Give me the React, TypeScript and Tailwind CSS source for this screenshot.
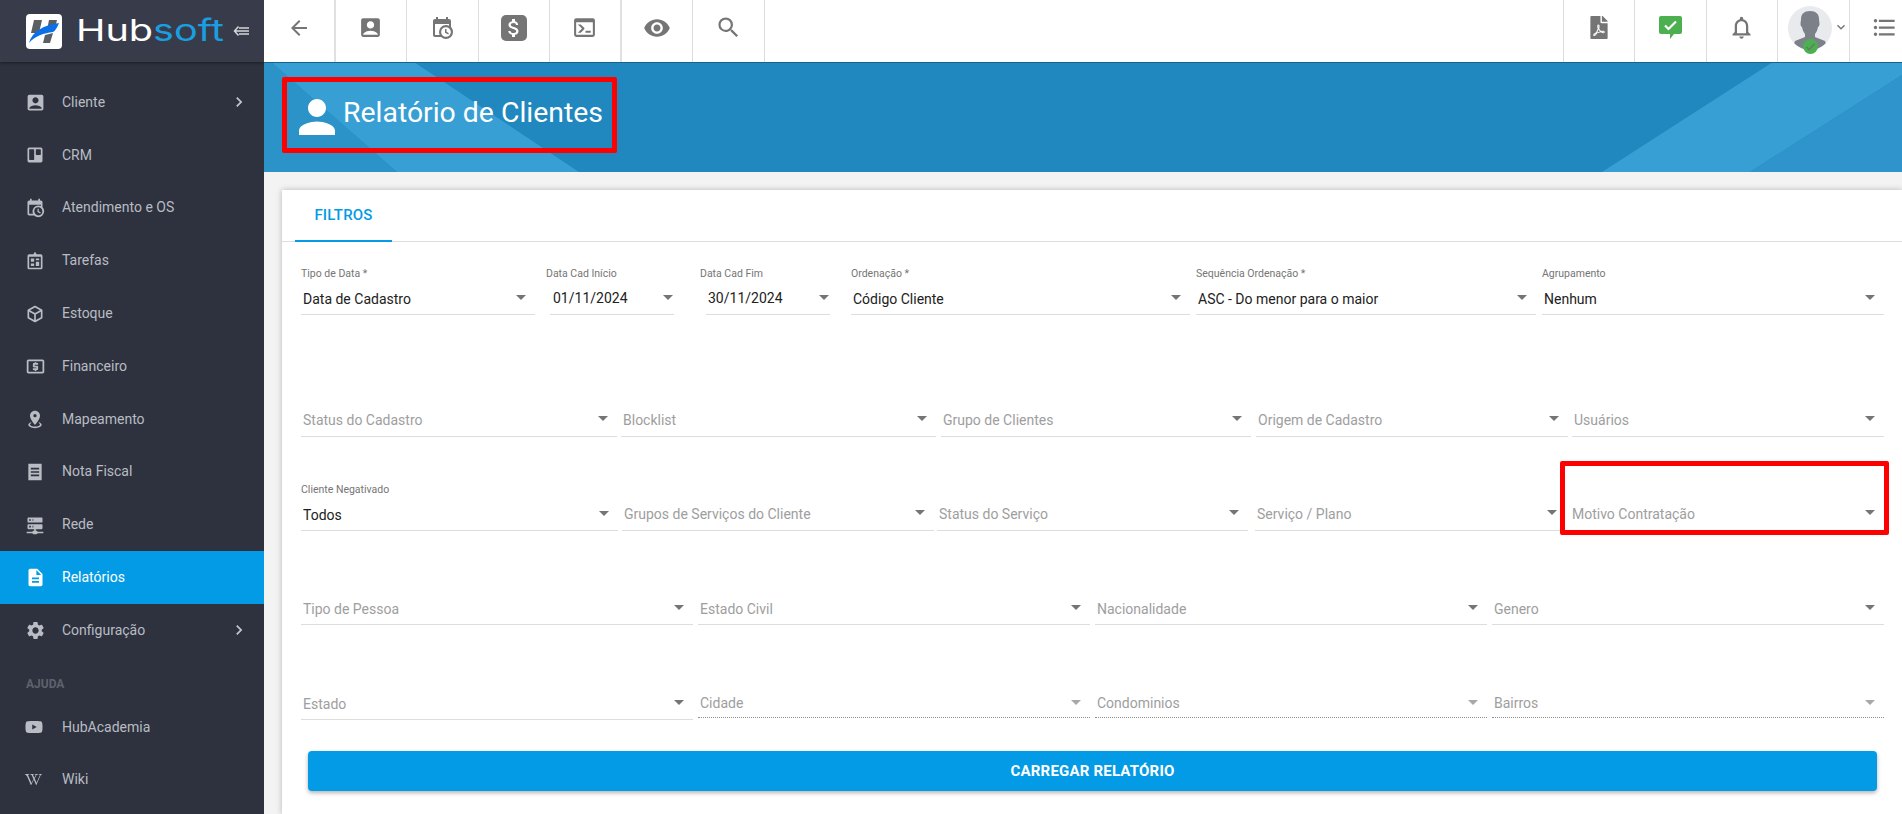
import type { ReactNode } from "react";
import {
  MdAccountBox,
  MdArrowBack,
  MdAttachMoney,
  MdChevronRight,
  MdDescription,
  MdExpandMore,
  MdFormatListBulleted,
  MdLocalAtm,
  MdNotificationsNone,
  MdRemoveRedEye,
  MdSearch,
  MdSettings,
} from "react-icons/md";
import { FaFilePdf, FaWikipediaW, FaYoutube } from "react-icons/fa";

// Material Design Icons paths not worth importing another package for.
const Mdi = ({ d, className = "w-5 h-5" }: { d: string; className?: string }) => (
  <svg viewBox="0 0 24 24" fill="currentColor" fillRule="evenodd" className={className}>
    <path d={d} />
  </svg>
);

const TRELLO =
  "M5 3h14a2 2 0 0 1 2 2v14a2 2 0 0 1-2 2H5a2 2 0 0 1-2-2V5a2 2 0 0 1 2-2zM5.8 5a.8.8 0 0 0-.8.8v11.4a.8.8 0 0 0 .8.8h4.4a.8.8 0 0 0 .8-.8V5.8a.8.8 0 0 0-.8-.8H5.8zm8 0a.8.8 0 0 0-.8.8v5.4a.8.8 0 0 0 .8.8h4.4a.8.8 0 0 0 .8-.8V5.8a.8.8 0 0 0-.8-.8h-4.4z";
const CALENDAR_CLOCK =
  "M15,13H16.5V15.82L18.94,17.23L18.19,18.53L15,16.69V13M19,8H5V19H9.67C9.24,18.09 9,17.07 9,16A7,7 0 0,1 16,9C17.07,9 18.09,9.24 19,9.67V8M5,21C3.89,21 3,20.1 3,19V5C3,3.89 3.89,3 5,3H6V1H8V3H16V1H18V3H19A2,2 0 0,1 21,5V11.1C22.24,12.36 23,14.09 23,16A7,7 0 0,1 16,23C14.09,23 12.36,22.24 11.1,21H5M16,11.15A4.85,4.85 0 0,0 11.15,16C11.15,18.68 13.32,20.85 16,20.85A4.85,4.85 0 0,0 20.85,16C20.85,13.32 18.68,11.15 16,11.15Z";
const BOARD =
  "M12 1l2 3h5a2 2 0 0 1 2 2v14a2 2 0 0 1-2 2H5a2 2 0 0 1-2-2V6a2 2 0 0 1 2-2h5l2-3zM5 7v13h14V7H5zm2 2h4v4H7V9zm6 0h4v2h-4V9zm0 4h4v5h-4v-5zm-6 2h4v3H7v-3z";
const CUBE =
  "M21,16.5C21,16.88 20.79,17.21 20.47,17.38L12.57,21.82C12.41,21.94 12.21,22 12,22C11.79,22 11.59,21.94 11.43,21.82L3.53,17.38C3.21,17.21 3,16.88 3,16.5V7.5C3,7.12 3.21,6.79 3.53,6.62L11.43,2.18C11.59,2.06 11.79,2 12,2C12.21,2 12.41,2.06 12.57,2.18L20.47,6.62C20.79,6.79 21,7.12 21,7.5V16.5M12,4.15L6.04,7.5L12,10.85L17.96,7.5L12,4.15M5,15.91L11,19.29V12.58L5,9.21V15.91M19,15.91V9.21L13,12.58V19.29L19,15.91Z";
const MARKER =
  "M12,2C15.31,2 18,4.66 18,7.95C18,12.41 12,19 12,19C12,19 6,12.41 6,7.95C6,4.66 8.69,2 12,2M12,6A2,2 0 0,0 10,8A2,2 0 0,0 12,10A2,2 0 0,0 14,8A2,2 0 0,0 12,6M20,19C20,21.21 16.42,23 12,23C7.58,23 4,21.21 4,19C4,17.71 5.22,16.56 7.11,15.83L7.75,16.74C6.67,17.19 6,17.81 6,18.5C6,19.88 8.69,21 12,21C15.31,21 18,19.88 18,18.5C18,17.81 17.33,17.19 16.25,16.74L16.89,15.83C18.78,16.56 20,17.71 20,19Z";
const RECEIPT =
  "M4 2h16v20H4V2zm3 5v2h10V7H7zm0 4v2h10v-2H7zm0 4v2h10v-2H7z";
const SERVER =
  "M13,19H14A1,1 0 0,1 15,20H22V22H15A1,1 0 0,1 14,23H10A1,1 0 0,1 9,22H2V20H9A1,1 0 0,1 10,19H11V17H4A1,1 0 0,1 3,16V12A1,1 0 0,1 4,11H20A1,1 0 0,1 21,12V16A1,1 0 0,1 20,17H13V19M4,3H20A1,1 0 0,1 21,4V8A1,1 0 0,1 20,9H4A1,1 0 0,1 3,8V4A1,1 0 0,1 4,3M9,7H10V5H9V7M9,15H10V13H9V15M5,5V7H7V5H5M5,13V15H7V13H5Z";
const CONSOLE =
  "M20,19V7H4V19H20M20,3A2,2 0 0,1 22,5V19A2,2 0 0,1 20,21H4A2,2 0 0,1 2,19V5A2,2 0 0,1 4,3H20M13,17V15H18V17H13M9.58,13L5.57,9H8.4L11.7,12.3C12.09,12.69 12.09,13.33 11.7,13.72L8.42,17H5.59L9.58,13Z";

interface NavItem {
  label: string;
  icon: ReactNode;
  arrow?: boolean;
  active?: boolean;
}

const NAV: NavItem[] = [
  { label: "Cliente", icon: <MdAccountBox className="w-[21px] h-[21px]" />, arrow: true },
  { label: "CRM", icon: <Mdi d={TRELLO} /> },
  { label: "Atendimento e OS", icon: <Mdi d={CALENDAR_CLOCK} /> },
  { label: "Tarefas", icon: <Mdi d={BOARD} /> },
  { label: "Estoque", icon: <Mdi d={CUBE} /> },
  { label: "Financeiro", icon: <MdLocalAtm className="w-[21px] h-[21px]" /> },
  { label: "Mapeamento", icon: <Mdi d={MARKER} /> },
  { label: "Nota Fiscal", icon: <Mdi d={RECEIPT} /> },
  { label: "Rede", icon: <Mdi d={SERVER} /> },
  { label: "Relatórios", icon: <MdDescription className="w-[21px] h-[21px]" />, active: true },
  { label: "Configuração", icon: <MdSettings className="w-[21px] h-[21px]" />, arrow: true },
];

function NavRow({ item }: { item: NavItem }) {
  return (
    <div
      className={`h-[52.8px] flex items-center pl-[25px] pr-[15px] text-[14px] ${
        item.active ? "bg-[#039be5] text-white" : "text-[#b9bcc3]"
      }`}
    >
      <span className="w-[37px] flex items-center">{item.icon}</span>
      <span className="flex-1">{item.label}</span>
      {item.arrow && <MdChevronRight className="w-[20px] h-[20px] text-[#c4c7cc]" />}
    </div>
  );
}

function Sidebar() {
  return (
    <aside className="w-[264px] shrink-0 bg-[#2d323e] flex flex-col">
      <div className="h-[62px] bg-[#383c4a] flex items-center pl-[26px] shadow-[0_1px_3px_rgba(0,0,0,0.45)]">
        <svg viewBox="0 0 36 35" className="w-[36px] h-[35px] shrink-0">
          <rect width="36" height="35" rx="4" fill="#fff" />
          <path d="M8 6h8l-3 13H5zM23 6h8l-2 8-8 2zM19 21l8-2-3 10h-7z" fill="#5b5e63" />
          <path d="M3 29C6 18 17 11 33 9c-2 5-4 8-6 9-9 1-18 4-24 11z" fill="#0b6fe8" />
        </svg>
        <div className="ml-[14px] w-[142px] -mt-[2px] text-[30px] leading-none font-normal origin-left scale-x-[1.32] font-[Inter,sans-serif] whitespace-nowrap">
          <span className="text-white">Hub</span>
          <span className="text-[#1a9ee2]">soft</span>
        </div>
        <svg viewBox="0 0 16 12" fill="none" stroke="#d5d6da" strokeWidth="1.5" className="w-[16px] h-[12px] ml-[15px] shrink-0">
          <path d="M5.5 1.5L1.5 6l4 4.5M2 6h14M6 3h10M6 9h10" />
        </svg>
      </div>
      <nav className="pt-[14px]">
        {NAV.map((item) => (
          <NavRow key={item.label} item={item} />
        ))}
        <div className="h-[44px] pt-[20px] pl-[26px] text-[12px] leading-[14px] font-bold text-[#5e626d]">AJUDA</div>
        <NavRow item={{ label: "HubAcademia", icon: <FaYoutube className="w-[18px] h-[18px]" /> }} />
        <NavRow item={{ label: "Wiki", icon: <FaWikipediaW className="w-[17px] h-[17px]" /> }} />
      </nav>
    </aside>
  );
}

const Cell = ({ children, className = "" }: { children?: ReactNode; className?: string }) => (
  <div className={`h-full pb-[7px] flex items-center shrink-0 text-[#757575] ${className}`}>{children}</div>
);

function Topbar() {
  return (
    <header className="h-[62px] shrink-0 bg-white flex items-stretch relative z-10 shadow-[0_1px_0_#15648e]">
      <Cell className="w-[71.5px] justify-center border-r-2 border-[#e0e0e0]">
        <MdArrowBack className="w-[24px] h-[24px]" />
      </Cell>
      <Cell className="w-[71.5px] justify-center border-r border-[#ddd]">
        <MdAccountBox className="w-[25px] h-[25px]" />
      </Cell>
      <Cell className="w-[71.5px] justify-center border-r border-[#ddd]">
        <Mdi d={CALENDAR_CLOCK} className="w-[24px] h-[24px]" />
      </Cell>
      <Cell className="w-[71.5px] justify-center border-r border-[#ddd]">
        <span className="w-[26px] h-[26px] rounded-[5px] bg-[#757575] flex items-center justify-center">
          <MdAttachMoney className="w-[24px] h-[24px] text-white" />
        </span>
      </Cell>
      <Cell className="w-[71.5px] justify-center border-r-2 border-[#e0e0e0]">
        <Mdi d={CONSOLE} className="w-[25px] h-[25px]" />
      </Cell>
      <Cell className="w-[71.5px] justify-center border-r border-[#ddd]">
        <MdRemoveRedEye className="w-[28px] h-[28px]" />
      </Cell>
      <Cell className="w-[71.5px] justify-center border-r border-[#ddd]">
        <MdSearch className="w-[27px] h-[27px]" />
      </Cell>
      <div className="flex-1" />
      <Cell className="w-[71.5px] justify-center border-l border-[#ddd]">
        <FaFilePdf className="w-[18px] h-[23px]" />
      </Cell>
      <Cell className="w-[71.5px] justify-center border-l border-[#ddd]">
        <svg viewBox="0 0 23 23" className="w-[23px] h-[23px]">
          <path d="M2 0h19a2 2 0 0 1 2 2v14a2 2 0 0 1-2 2h-6l-4 5v-5H2a2 2 0 0 1-2-2V2a2 2 0 0 1 2-2z" fill="#4caf50" />
          <path d="M6 9.5l3.500 3.500L17 5.500" fill="none" stroke="#fff" strokeWidth="2.2" />
        </svg>
      </Cell>
      <Cell className="w-[71.5px] justify-center border-l border-[#ddd]">
        <MdNotificationsNone className="w-[27px] h-[27px]" />
      </Cell>
      <Cell className="w-[72px] pl-[10px] border-l border-[#ddd]">
        <div className="relative w-[44px] h-[44px] shrink-0">
          <svg viewBox="0 0 44 44" className="w-[44px] h-[44px]">
            <defs>
              <clipPath id="av">
                <circle cx="22" cy="22" r="22" />
              </clipPath>
            </defs>
            <circle cx="22" cy="22" r="22" fill="#e9eaee" />
            <path
              d="M22 5c6 0 9 3 9 8 0 2 .5 3 .5 5s-1 3-1.500 3c-.5 3-1.500 5-3 7v3l10 4 3 9H4l3-9 10-4v-3c-1.500-2-2.500-4-3-7-.5 0-1.500-1-1.500-3s.5-3 .5-5c0-5 3-8 9-8z"
              fill="#7b8089"
              clipPath="url(#av)"
            />
          </svg>
          <span className="absolute left-[15px] top-[33px] w-[15px] h-[15px] rounded-full bg-[#4caf50] flex items-center justify-center">
            <svg viewBox="0 0 12 12" className="w-[11px] h-[11px]" fill="none" stroke="#5f7f62" strokeWidth="1.4">
              <path d="M1.500 6.500L4.500 9.500L10.500 3" />
            </svg>
          </span>
        </div>
        <MdExpandMore className="w-[16px] h-[16px] shrink-0 ml-[1px] -mt-[2px]" />
      </Cell>
      <Cell className="w-[53px] justify-center pl-[17px] border-l border-[#ddd]">
        <MdFormatListBulleted className="w-[27px] h-[27px]" />
      </Cell>
    </header>
  );
}

interface FieldProps {
  w: string;
  label?: string;
  value?: string;
  placeholder?: string;
  dotted?: boolean;
  labelClass?: string;
  valueClass?: string;
  arrowClass?: string;
  children?: ReactNode;
}

function Field({ w, label, value, placeholder, dotted, labelClass = "", valueClass = "pb-[2px]", arrowClass = "right-[9px]", children }: FieldProps) {
  return (
    <div className={`relative h-[48px] shrink-0 flex flex-col justify-end ${w}`}>
      {label && (
        <div className={`text-[10.5px] leading-[14px] mb-[4px] text-[#757575] whitespace-nowrap ${labelClass}`}>{label}</div>
      )}
      <div
        className={`relative h-[28px] pl-[2px] flex items-center text-[14px] whitespace-nowrap ${
          dotted ? "border-b border-dotted border-[#8f8f8f] -translate-y-[2px]" : "box-content border-b border-[#ddd]"
        } ${value ? "text-[#212121]" : "text-[#9e9e9e]"} ${valueClass}`}
      >
        {value ?? placeholder}
        <span
          className={`absolute top-[10px] w-0 h-0 border-x-[5px] border-x-transparent border-t-[5px] ${
            dotted ? "border-t-[#a8a8a8]" : "border-t-[#757575]"
          } ${arrowClass}`}
        />
      </div>
      {children}
    </div>
  );
}

function Filters() {
  return (
    <div className="pl-[19px] pr-[18px]">
      <div className="flex pt-[25px]">
        <Field w="w-[234px]" valueClass="pb-[1px]" label="Tipo de Data *" value="Data de Cadastro" />
        <Field w="w-[124px] ml-[15px]" label="Data Cad Início" value="01/11/2024" labelClass="-ml-[4px]" valueClass="pl-[3px] pb-[3px]" arrowClass="right-[1px]" />
        <Field w="w-[124px] ml-[32px]" label="Data Cad Fim" value="30/11/2024" labelClass="-ml-[6px]" valueClass="pl-[2px] pb-[3px]" arrowClass="right-[1px]" />
        <Field w="w-[339px] ml-[21px]" valueClass="pb-[1px]" label="Ordenação *" value="Código Cliente" />
        <Field w="w-[340px] ml-[6px]" valueClass="pb-[1px]" label="Sequência Ordenação *" value="ASC - Do menor para o maior" />
        <Field w="w-[342px] ml-[6px]" valueClass="pb-[1px]" label="Agrupamento" value="Nenhum" />
      </div>
      <div className="flex mt-[74px]">
        <Field w="w-[316px]" placeholder="Status do Cadastro" />
        <Field w="w-[315px] ml-[4px]" placeholder="Blocklist" />
        <Field w="w-[310px] ml-[5px]" placeholder="Grupo de Clientes" />
        <Field w="w-[312px] ml-[5px]" placeholder="Origem de Cadastro" />
        <Field w="w-[312px] ml-[4px]" placeholder="Usuários" />
      </div>
      <div className="flex mt-[46px]">
        <Field w="w-[317px]" valueClass="pb-[1px]" label="Cliente Negativado" value="Todos" />
        <Field w="w-[312px] ml-[4px]" placeholder="Grupos de Serviços do Cliente" />
        <Field w="w-[311px] ml-[3px]" placeholder="Status do Serviço" />
        <Field w="w-[311px] ml-[7px]" placeholder="Serviço / Plano" />
        <Field w="w-[314px] ml-[4px]" placeholder="Motivo Contratação">
          <div className="absolute -left-[10px] -right-[5px] -top-[22px] -bottom-[4px] border-[5px] border-[#ff0000] rounded-[2px]" />
        </Field>
      </div>
      <div className="grid grid-cols-4 gap-x-[5px] mt-[46px]">
        <Field w="" valueClass="pb-[1px]" placeholder="Tipo de Pessoa" />
        <Field w="" valueClass="pb-[1px]" placeholder="Estado Civil" />
        <Field w="" valueClass="pb-[1px]" placeholder="Nacionalidade" />
        <Field w="" valueClass="pb-[1px]" placeholder="Genero" />
      </div>
      <div className="grid grid-cols-4 gap-x-[5px] mt-[47px]">
        <Field w="" valueClass="pb-[1px]" placeholder="Estado" />
        <Field w="" valueClass="pb-[1px]" placeholder="Cidade" dotted />
        <Field w="" valueClass="pb-[1px]" placeholder="Condominios" dotted />
        <Field w="" valueClass="pb-[1px]" placeholder="Bairros" dotted />
      </div>
      <button className="mt-[31px] ml-[7px] w-[1569px] h-[40px] rounded-[4px] bg-[#039be5] text-white text-[15px] font-bold tracking-[0.2px] shadow-[0_2px_4px_rgba(0,0,0,0.3)]">
        CARREGAR RELATÓRIO
      </button>
    </div>
  );
}

export default function App() {
  return (
    <div className="flex h-screen w-full overflow-hidden font-[Roboto,sans-serif] bg-[#f3f3f3]">
      <Sidebar />
      <div className="flex-1 flex flex-col min-w-0">
        <Topbar />
        <section className="relative h-[110px] shrink-0 bg-[#2088be] overflow-hidden">
          <svg viewBox="0 0 1638 110" className="absolute inset-0 w-full h-full">
            <path d="M7 0h143l165 110H133z" fill="#389fd4" />
            <path d="M0 0h7l126 110H0z" fill="#2c93c9" />
            <path d="M1509 0h129v13l-152 97H1338z" fill="#389fd4" />
            <path d="M1638 13v97h-152z" fill="#2e94cb" />
          </svg>
          <div className="relative ml-[18px] mt-[15px] w-[335px] h-[76px] border-[5px] border-[#ff0000] rounded-[2px] flex items-center pl-[12px] text-white">
            <svg viewBox="4 4 16 16" fill="currentColor" className="w-[36px] h-[36px] shrink-0 mt-[4px]">
              <path d="M12 12c2.210 0 4-1.790 4-4s-1.790-4-4-4-4 1.790-4 4 1.790 4 4 4zm0 2c-2.670 0-8 1.340-8 4v2h16v-2c0-2.660-5.330-4-8-4z" />
            </svg>
            <h1 className="ml-[8px] mb-[3px] text-[28.4px] leading-none whitespace-nowrap">Relatório de Clientes</h1>
          </div>
        </section>
        <main className="flex-1 pl-[18px] pt-[18px] min-h-0">
          <div className="h-full bg-white shadow-[0_0_6px_rgba(0,0,0,0.25)]">
            <div className="h-[52px] pl-[13px] border-b border-[#ddd]">
              <div className="w-[97px] h-[52px] border-b-2 border-[#039be5] flex items-center justify-center text-[15px] font-medium tracking-[0.2px] text-[#039be5]">
                FILTROS
              </div>
            </div>
            <Filters />
          </div>
        </main>
      </div>
    </div>
  );
}
